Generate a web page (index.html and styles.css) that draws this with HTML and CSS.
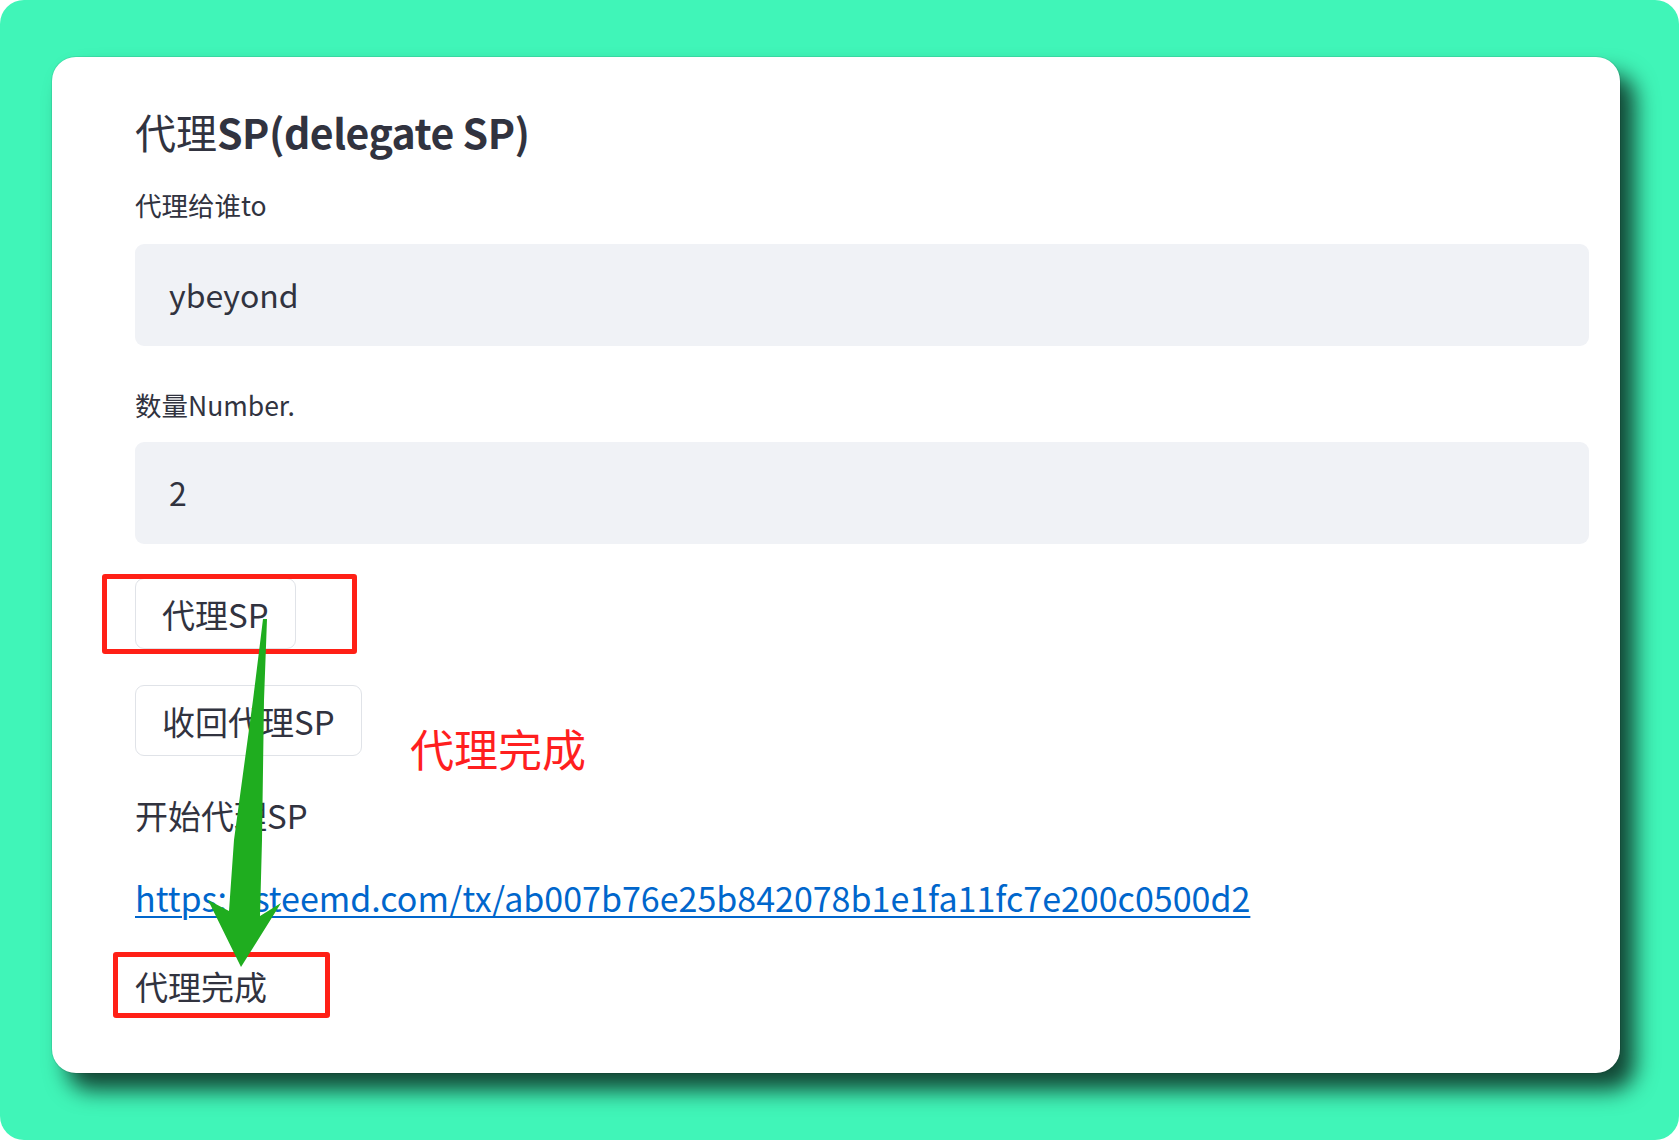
FILE: index.html
```html
<!DOCTYPE html>
<html lang="zh">
<head>
<meta charset="utf-8">
<title>代理SP</title>
<link rel="stylesheet" href="styles.css">
</head>
<body>
<div class="frame">
  <div class="card">
    <h1 class="title"><span class="title-cjk">代理</span>SP(delegate SP)</h1>
    <div class="label">代理给谁to</div>
    <div class="input">ybeyond</div>
    <div class="label label-2">数量Number.</div>
    <div class="input input-2">2</div>
    <button class="btn">代理SP</button>
    <button class="btn btn-2">收回代理SP</button>
    <p class="text start">开始代理SP</p>
    <a class="link" href="#">https://steemd.com/tx/ab007b76e25b842078b1e1fa11fc7e200c0500d2</a>
    <p class="text done">代理完成</p>
  </div>

  <div class="mark mark-1"></div>
  <div class="mark mark-2"></div>
  <div class="note">代理完成</div>
  <svg class="arrow" width="1679" height="1141" viewBox="0 0 1679 1141">
    <polygon fill="#1fad1f" points="263,619 267,619 264,700 262,840 260,916 281,903 241,967 208,900 229,911 234,840 253,700"/>
  </svg>
</div>
</body>
</html>
```

FILE: styles.css
```css
html, body {
  margin: 0;
  padding: 0;
  background: #ffffff;
}

body {
  font-family: "Noto Sans CJK SC", "Noto Sans", sans-serif;
  color: #31333f;
}

.frame {
  position: relative;
  width: 1679px;
  height: 1140px;
  background: #40f5b8;
  border-radius: 24px;
  padding: 57px 0 0 52px;
  box-sizing: border-box;
  overflow: hidden;
}

.card {
  position: relative;
  width: 1568px;
  height: 1016px;
  box-sizing: border-box;
  padding: 48px 31px 0 83px;
  background: #ffffff;
  border-radius: 24px;
  box-shadow: 0 0 0 1px rgba(0, 0, 0, 0.08), 15px 17px 22px rgba(0, 0, 0, 0.72);
  display: flex;
  flex-direction: column;
  align-items: flex-start;
}

.title {
  margin: 0;
  font-size: 41px;
  line-height: 52px;
  font-weight: 600;
  letter-spacing: -0.5px;
}

.title-cjk {
  font-weight: 400;
  letter-spacing: 0;
}

.label {
  margin-top: 31px;
  font-size: 26.5px;
  line-height: 34px;
}

.label-2 {
  margin-top: 42px;
}

.input {
  align-self: stretch;
  margin-top: 22px;
  height: 102px;
  box-sizing: border-box;
  padding: 0 0 3px 34px;
  background: #f0f2f6;
  border-radius: 9px;
  font-size: 32px;
  display: flex;
  align-items: center;
}

.input-2 {
  margin-top: 20px;
}

.btn {
  margin-top: 34px;
  height: 71px;
  box-sizing: border-box;
  padding: 0 26px;
  background: #ffffff;
  border: 1px solid #e0e3e8;
  border-radius: 9px;
  font-family: inherit;
  font-size: 33px;
  line-height: 40px;
  color: #31333f;
}

.btn-2 {
  margin-top: 36px;
}

.text {
  margin: 0;
  font-size: 33px;
  line-height: 40px;
}

.start {
  margin-top: 39px;
}

.link {
  display: block;
  margin-top: 41px;
  font-size: 34px;
  line-height: 44px;
  color: #0066cc;
  text-decoration: underline;
  text-decoration-thickness: 2px;
  text-underline-offset: 4px;
}

.done {
  margin-top: 46px;
}

.mark {
  position: absolute;
  box-sizing: border-box;
  border: 5px solid #ff2016;
  border-radius: 3px;
}

.mark-1 {
  left: 102px;
  top: 574px;
  width: 255px;
  height: 80px;
}

.mark-2 {
  left: 113px;
  top: 952px;
  width: 217px;
  height: 66px;
}

.note {
  position: absolute;
  left: 410px;
  top: 722px;
  font-size: 44px;
  line-height: 52px;
  color: #ff1f1f;
}

.arrow {
  position: absolute;
  left: 0;
  top: 0;
  pointer-events: none;
}
```
